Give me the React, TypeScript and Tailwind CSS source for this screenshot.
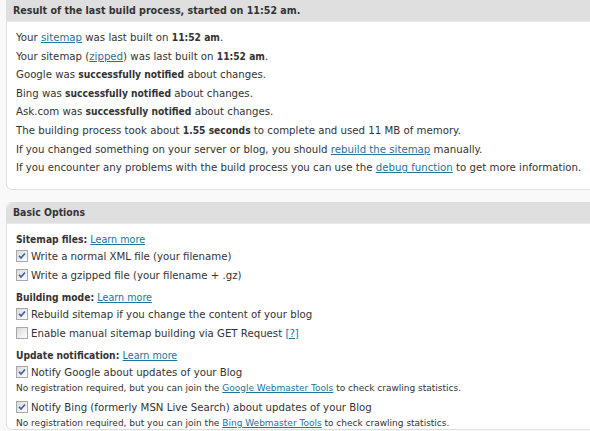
import React from "react";

const A = ({ children }: { children: React.ReactNode }) => (
  <a href="#" className="text-[#21759b] underline">{children}</a>
);

const B = ({ children }: { children: React.ReactNode }) => (
  <b className="font-bold" style={{ fontFamily: "'DejaVu Sans Condensed', 'DejaVu Sans', sans-serif" }}>{children}</b>
);

const Box = ({ checked }: { checked: boolean }) => (
  <svg width="12" height="12" viewBox="0 0 12 12" className="shrink-0">
    <defs>
      <linearGradient id="cbg" x1="0" y1="0" x2="1" y2="1">
        <stop offset="0" stopColor="#d8d8d8" />
        <stop offset="1" stopColor="#ffffff" />
      </linearGradient>
    </defs>
    <rect x="0.5" y="0.5" width="11" height="11" fill="url(#cbg)" stroke="#a8a8a8" />
    {checked && (
      <path d="M3 5.8 L5 8 L9 3.4" fill="none" stroke="#3c5fa0" strokeWidth="1.6" />
    )}
  </svg>
);

const Row = ({ checked, children }: { checked: boolean; children: React.ReactNode }) => (
  <div className="flex items-center gap-[3px] h-[19px]">
    <Box checked={checked} />
    <span>{children}</span>
  </div>
);

export default function App() {
  return (
    <div
      className="w-[590px] h-[431px] overflow-hidden bg-[#f9f9f9] text-[#333] text-[10.2px] pl-[6px]"
      style={{ fontFamily: "Verdana, 'DejaVu Sans', sans-serif" }}
    >
      <div className="mt-[-6px] w-[600px] border border-[#dfdfdf] rounded-[6px] bg-white">
        <div className="h-[27px] pt-[6px] bg-[#dfdfdf] border-b border-[#eaeaea] pl-[6px] flex items-center text-[#333] rounded-t-[6px] text-[10.6px]">
          <B>Result of the last build process, started on 11:52 am.</B>
        </div>
        <div className="pl-[9px] pt-[7px] pb-[11px] leading-[18.6px] whitespace-nowrap">
          <div>Your <A>sitemap</A> was last built on <B>11:52 am</B>.</div>
          <div>Your sitemap (<A>zipped</A>) was last built on <B>11:52 am</B>.</div>
          <div>Google was <B>successfully notified</B> about changes.</div>
          <div>Bing was <B>successfully notified</B> about changes.</div>
          <div>Ask.com was <B>successfully notified</B> about changes.</div>
          <div>The building process took about <B>1.55 seconds</B> to complete and used 11 MB of memory.</div>
          <div>If you changed something on your server or blog, you should <A>rebuild the sitemap</A> manually.</div>
          <div>If you encounter any problems with the build process you can use the <A>debug function</A> to get more information.</div>
        </div>
      </div>

      <div className="mt-[12px] w-[600px] border border-[#dfdfdf] rounded-[6px] bg-white">
        <div className="h-[21px] bg-[#dfdfdf] border-b border-[#eaeaea] pl-[6px] flex items-center rounded-t-[6px] text-[10.4px]">
          <B>Basic Options</B>
        </div>
        <div className="pl-[9px] pt-[8px] whitespace-nowrap">
          <div className="leading-[15px]"><B>Sitemap files:</B> <span className="text-[9.6px]"><A>Learn more</A></span></div>
          <Row checked>Write a normal XML file (your filename)</Row>
          <Row checked>Write a gzipped file (your filename + .gz)</Row>
          <div className="leading-[15px] mt-[5px]"><B>Building mode:</B> <span className="text-[9.6px]"><A>Learn more</A></span></div>
          <Row checked>Rebuild sitemap if you change the content of your blog</Row>
          <Row checked={false}>Enable manual sitemap building via GET Request <A>[?]</A></Row>
          <div className="leading-[15px] mt-[5px]"><B>Update notification:</B> <span className="text-[9.6px]"><A>Learn more</A></span></div>
          <Row checked>Notify Google about updates of your Blog</Row>
          <div className="text-[9px] leading-[12px] mb-[4px]">No registration required, but you can join the <A>Google Webmaster Tools</A> to check crawling statistics.</div>
          <Row checked>Notify Bing (formerly MSN Live Search) about updates of your Blog</Row>
          <div className="text-[9px] leading-[12px]">No registration required, but you can join the <A>Bing Webmaster Tools</A> to check crawling statistics.</div>
        </div>
      </div>
    </div>
  );
}
